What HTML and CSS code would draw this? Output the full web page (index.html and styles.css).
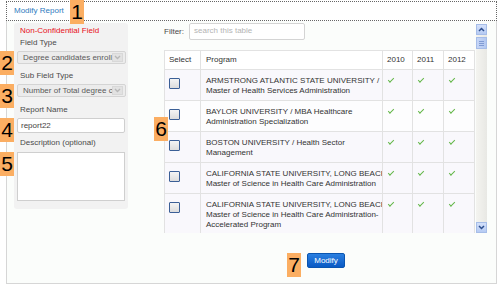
FILE: index.html
```html
<!DOCTYPE html>
<html>
<head>
<meta charset="utf-8">
<link rel="stylesheet" href="styles.css">
</head>
<body>
<div class="header">Modify Report</div>
<div class="main">
  <div class="left">
    <div class="red">Non-Confidential Field</div>
    <div class="lbl l1">Field Type</div>
    <div class="select"><span class="seltext">Degree candidates enrolled</span><span class="arrow"><svg width="7" height="5" viewBox="0 0 7 5"><path d="M1 1 L3.5 3.5 L6 1" fill="none" stroke="#b8b8b8" stroke-width="1.4"/></svg></span></div>
    <div class="lbl l2">Sub Field Type</div>
    <div class="select"><span class="seltext">Number of Total degree candidates</span><span class="arrow"><svg width="7" height="5" viewBox="0 0 7 5"><path d="M1 1 L3.5 3.5 L6 1" fill="none" stroke="#b8b8b8" stroke-width="1.4"/></svg></span></div>
    <div class="lbl l3">Report Name</div>
    <div class="input">report22</div>
    <div class="lbl l4">Description (optional)</div>
    <div class="textarea"></div>
  </div>
  <div class="right">
    <div class="scrollwrap">
      <div class="content">
        <div class="filter"><span>Filter:</span><div class="search">search this table</div></div>
        <table class="tbl">
          <colgroup><col class="c1"><col class="c2"><col class="c3"><col class="c4"><col class="c5"></colgroup>
          <thead><tr><th>Select</th><th>Program</th><th>2010</th><th>2011</th><th>2012</th></tr></thead>
          <tbody>
            <tr class="odd"><td><span class="cb"></span></td><td>ARMSTRONG ATLANTIC STATE UNIVERSITY /<br>Master of Health Services Administration</td><td><i class="ck"></i></td><td><i class="ck"></i></td><td><i class="ck"></i></td></tr>
            <tr class="even"><td><span class="cb"></span></td><td>BAYLOR UNIVERSITY / MBA Healthcare<br>Administration Specialization</td><td><i class="ck"></i></td><td><i class="ck"></i></td><td><i class="ck"></i></td></tr>
            <tr class="odd"><td><span class="cb"></span></td><td>BOSTON UNIVERSITY / Health Sector<br>Management</td><td><i class="ck"></i></td><td><i class="ck"></i></td><td><i class="ck"></i></td></tr>
            <tr class="odd"><td><span class="cb"></span></td><td>CALIFORNIA STATE UNIVERSITY, LONG BEACH /<br>Master of Science in Health Care Administration</td><td><i class="ck"></i></td><td><i class="ck"></i></td><td><i class="ck"></i></td></tr>
            <tr class="odd"><td><span class="cb"></span></td><td>CALIFORNIA STATE UNIVERSITY, LONG BEACH /<br>Master of Science in Health Care Administration-<br>Accelerated Program</td><td><i class="ck"></i></td><td><i class="ck"></i></td><td><i class="ck"></i></td></tr>
          </tbody>
        </table>
      </div>
      <div class="scrollbar">
        <div class="sbtn"><svg width="9" height="9" viewBox="0 0 9 9"><path d="M2 6 L4.5 3.5 L7 6" fill="none" stroke="#2d4f8e" stroke-width="1.5"/></svg></div>
        <div class="thumb"><span></span><span></span><span></span></div>
        <div class="track"></div>
        <div class="sbtn"><svg width="9" height="9" viewBox="0 0 9 9"><path d="M2 3 L4.5 5.5 L7 3" fill="none" stroke="#2d4f8e" stroke-width="1.5"/></svg></div>
      </div>
    </div>
    <div class="btnrow"><button class="btn">Modify</button></div>
  </div>
</div>
<div class="num n1">1</div>
<div class="num n2">2</div>
<div class="num n3">3</div>
<div class="num n4">4</div>
<div class="num n5">5</div>
<div class="num n6">6</div>
<div class="num n7">7</div>
</body>
</html>
```
FILE: styles.css
```css
* { box-sizing: border-box; }
html, body { margin: 0; padding: 0; }
body {
  width: 500px;
  height: 286px;
  overflow: hidden;
  background: #ffffff;
  font-family: "Liberation Sans", Arial, sans-serif;
  font-size: 8px;
  color: #3a3a3a;
  position: relative;
}
.header {
  margin: 1px 3px 0 6px;
  height: 20px;
  border: 1px dotted #666;
  color: #2f7cc0;
  padding-left: 7px;
  line-height: 17px;
}
.main {
  margin-left: 6px;
  width: 491px;
  height: 263px;
  border: 1px solid #d6d6d6;
  border-top: none;
  background: #fbfdfb;
  display: flex;
  align-items: flex-start;
}
.left {
  margin: 2px 0 0 7px;
  width: 114px;
  height: 186px;
  background: #f2f2f2;
  border-radius: 3px;
  padding: 3px 0 0 3px;
}
.red { color: #e8101a; line-height: 10px; padding-left: 3px; }
.lbl { color: #4a4a4a; line-height: 10px; padding-left: 3px; }
.l1 { margin-top: 2px; margin-bottom: 3px; }
.l2 { margin-top: 7px; margin-bottom: 3px; }
.l3 { margin-top: 8px; margin-bottom: 3px; }
.l4 { margin-top: 5px; margin-bottom: 4px; }
.select {
  width: 109px;
  height: 13px;
  border: 1px solid #d4d4d4;
  border-radius: 2px;
  background: #ececec;
  display: flex;
  align-items: center;
  overflow: hidden;
  color: #5a5a5a;
}
.seltext { flex: 1; white-space: nowrap; overflow: hidden; padding-left: 5px; }
.arrow {
  width: 11px;
  height: 9px;
  margin-right: 2px;
  background: #e2e2e2;
  border: 1px solid #d8d8d8;
  display: flex;
  align-items: center;
  justify-content: center;
}
.input {
  width: 108px;
  height: 15px;
  border: 1px solid #cfcfcf;
  border-radius: 2px;
  background: #fff;
  padding-left: 3px;
  line-height: 13px;
  color: #444;
}
.textarea {
  width: 108px;
  height: 49px;
  border: 1px solid #cfcfcf;
  background: #fff;
}
.right { margin: 2px 0 0 36px; width: 323px; }
.scrollwrap { display: flex; align-items: flex-start; height: 210px; }
.content { width: 312px; height: 210px; overflow: hidden; }
.filter { display: flex; align-items: center; height: 17px; color: #4a4a4a; }
.search {
  margin-left: 5px;
  width: 116px;
  height: 17px;
  border: 1px solid #d4d4d4;
  border-radius: 2px;
  background: #fff;
  color: #b4b4b4;
  padding-left: 4px;
  line-height: 14px;
}
.tbl {
  margin-top: 10px;
  width: 310px;
  border-collapse: collapse;
  table-layout: fixed;
  border: 1px solid #dedede;
}
.c1 { width: 36px; } .c2 { width: 182px; } .c3 { width: 30px; } .c4 { width: 31px; } .c5 { width: 31px; }
.tbl th, .tbl td {
  border: 1px solid #e2e2e2;
  text-align: left;
  vertical-align: top;
  font-weight: normal;
  line-height: 10px;
  color: #333;
}
.tbl th { height: 19px; padding: 4px 0 0 4px; background: #fff; }
.tbl th:nth-child(2) { padding-left: 5px; }
.tbl td { padding: 6px 0 4px 4px; }
.tbl td:nth-child(2) { padding-left: 5px; white-space: nowrap; overflow: hidden; }
.odd td { background: #f9f8fc; }
.even td { background: #fdfdfe; }
.cb {
  display: block;
  margin-top: 2px;
  width: 11px;
  height: 11px;
  border: 1px solid #3b5f96;
  border-radius: 1px;
  background: linear-gradient(#f4f4f4, #dcdcdc);
}
.ck {
  display: block;
  margin-top: 3px;
  width: 7px;
  height: 5px;
  position: relative;
}
.ck::before {
  content: "";
  position: absolute;
  left: 1px;
  top: -1px;
  width: 5px;
  height: 2px;
  border-left: 1.5px solid #62b646;
  border-bottom: 1.5px solid #62b646;
  transform: rotate(-45deg);
}
.scrollbar {
  margin: 1px 0 0 1px;
  width: 11px;
  height: 209px;
  display: flex;
  flex-direction: column;
  background: linear-gradient(90deg, #f4f4f0, #e8e8e4);
}
.sbtn {
  height: 11px;
  background: linear-gradient(#d3e0fa, #b6cbf3);
  border: 1px solid #a6bde8;
  display: flex;
  align-items: center;
  justify-content: center;
}
.thumb {
  margin-top: 2px;
  height: 12px;
  background: linear-gradient(90deg, #c6d6f7, #b3c8f0);
  border: 1px solid #a6bde8;
  display: flex;
  flex-direction: column;
  align-items: center;
  justify-content: center;
  gap: 1px;
}
.thumb span { display: block; width: 5px; height: 1px; background: #7f9bd3; }
.track { flex: 1; }
.btnrow { display: flex; justify-content: center; margin-top: 20px; padding-left: 1px; }
.btn {
  width: 38px;
  height: 15px;
  border: 1px solid #0a55b0;
  border-radius: 2px;
  background: linear-gradient(#2a7fe0, #0a5ac4);
  color: #fff;
  font-family: "Liberation Sans", Arial, sans-serif;
  font-size: 8px;
  padding: 0;
  line-height: 13px;
}
.num {
  position: absolute;
  width: 14px;
  height: 24px;
  background: #fbae62;
  color: #000;
  font-family: "Liberation Sans", Arial, sans-serif;
  font-size: 21px;
  line-height: 24px;
  text-align: center;
}
.n1 { left: 70px; top: 0; }
.n2 { left: 0; top: 51px; }
.n3 { left: 0; top: 84px; }
.n4 { left: 0; top: 118px; }
.n5 { left: 0; top: 152px; }
.n6 { left: 154px; top: 117px; }
.n7 { left: 287px; top: 253px; }
```
